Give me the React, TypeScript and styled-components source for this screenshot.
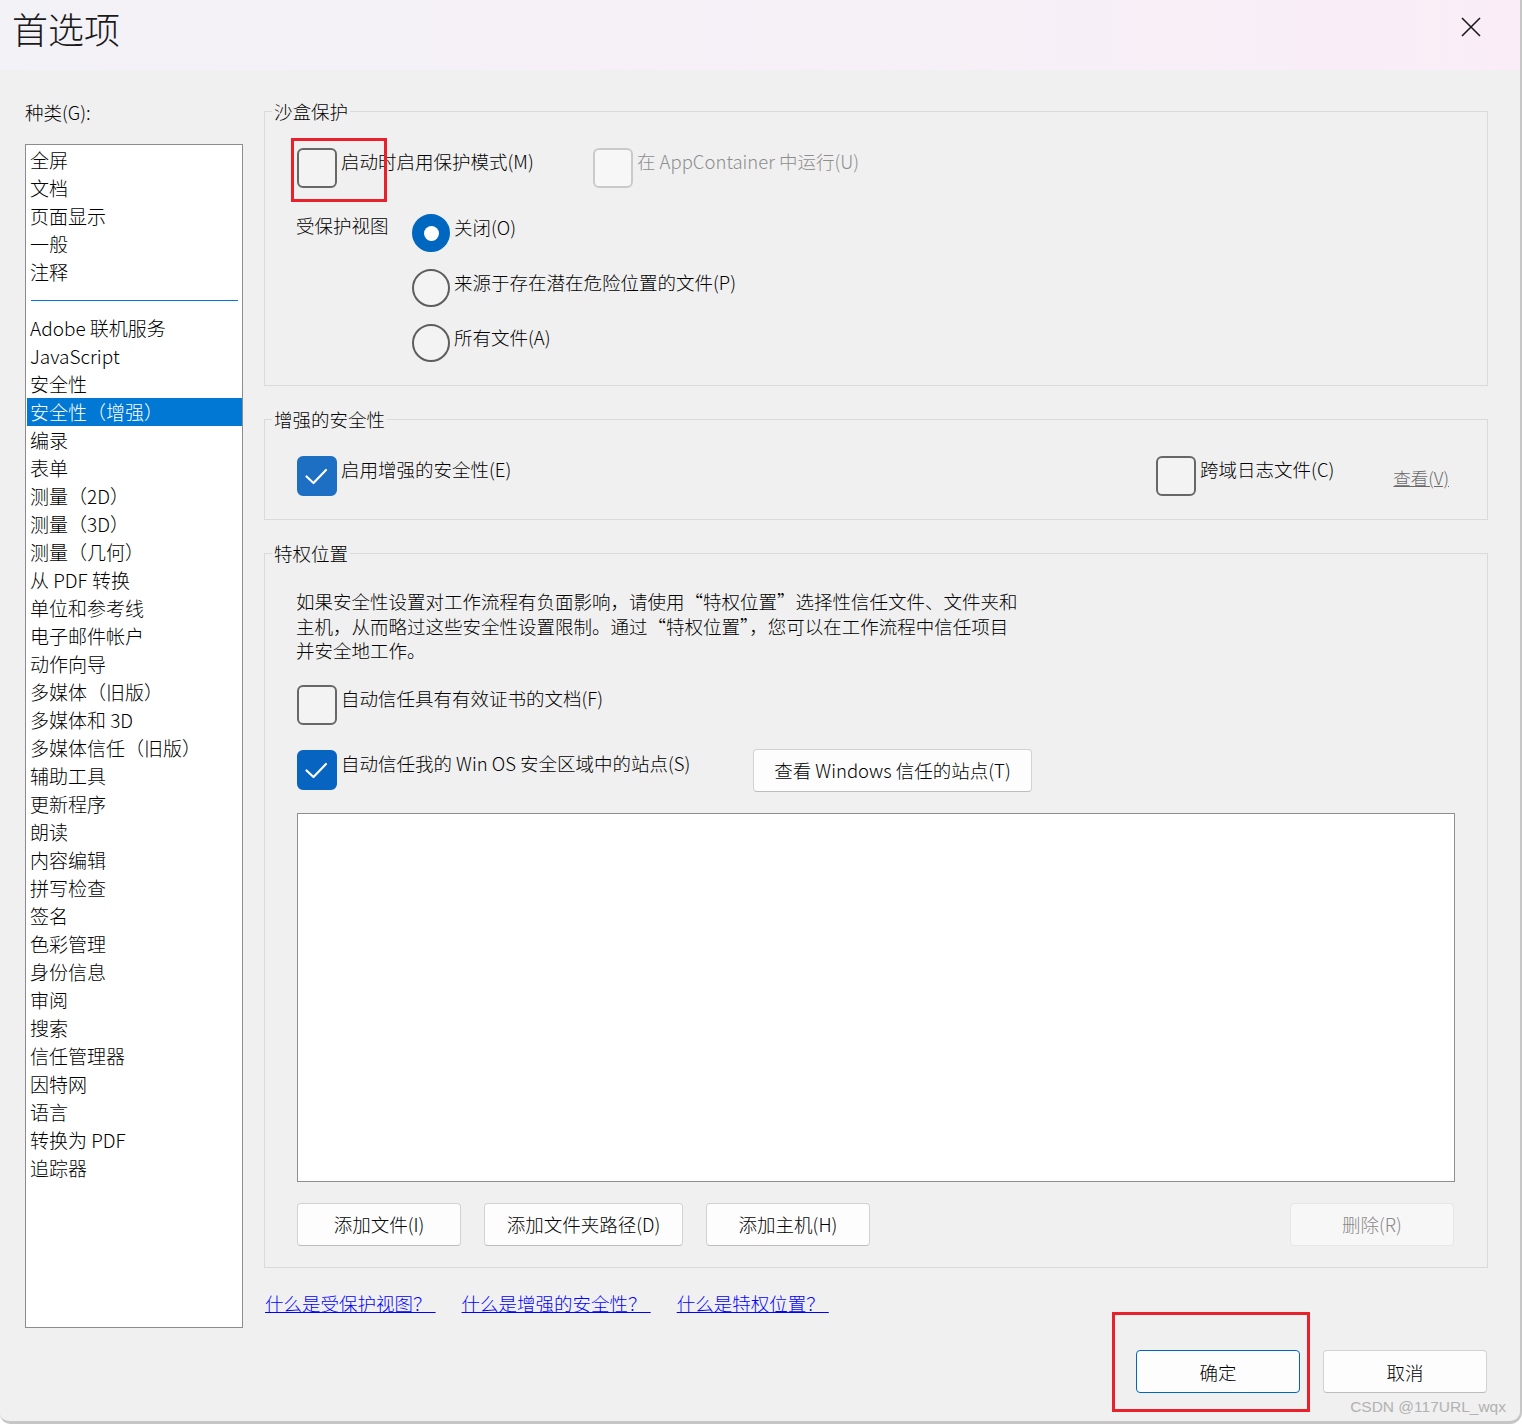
import styled, { createGlobalStyle } from "styled-components";

/* ─── Data ─── */

const topCategories = ["全屏", "文档", "页面显示", "一般", "注释"];

const categories = [
  "Adobe 联机服务",
  "JavaScript",
  "安全性",
  "安全性（增强）",
  "编录",
  "表单",
  "测量（2D）",
  "测量（3D）",
  "测量（几何）",
  "从 PDF 转换",
  "单位和参考线",
  "电子邮件帐户",
  "动作向导",
  "多媒体（旧版）",
  "多媒体和 3D",
  "多媒体信任（旧版）",
  "辅助工具",
  "更新程序",
  "朗读",
  "内容编辑",
  "拼写检查",
  "签名",
  "色彩管理",
  "身份信息",
  "审阅",
  "搜索",
  "信任管理器",
  "因特网",
  "语言",
  "转换为 PDF",
  "追踪器",
];

const SELECTED = "安全性（增强）";

/* ─── Styles ─── */

const GlobalStyle = createGlobalStyle`
  html, body {
    margin: 0;
    padding: 0;
    background: #ffffff;
  }
  body {
    font-family: "Noto Sans CJK SC", "Microsoft YaHei", "Noto Sans", sans-serif;
    font-weight: 300;
    color: #000;
  }
  * { box-sizing: border-box; }
`;

const Window = styled.div`
  position: relative;
  width: 1522px;
  height: 1424px;
  background: #f0f0f0;
  border-right: 2px solid #c6c6c6;
  border-bottom: 3px solid #c6c6c6;
  border-bottom-left-radius: 10px;
  border-bottom-right-radius: 12px;
  overflow: hidden;
`;

const TitleBar = styled.div`
  height: 70px;
  display: flex;
  justify-content: space-between;
  align-items: flex-start;
  padding: 0 39px 0 12px;
  background: linear-gradient(90deg, #f3f2f7 0%, #f6f0f7 60%, #faedf7 100%);
`;

const Title = styled.h1`
  margin: 0;
  font-size: 36px;
  font-weight: 300;
  line-height: 56px;
  color: #1a1a1a;
`;

const CloseButton = styled.button`
  margin-top: 17px;
  width: 20px;
  height: 20px;
  padding: 0;
  border: none;
  background: none;
  display: flex;
  color: #1a1a1a;
`;

const Body = styled.div`
  padding-left: 25px;
`;

const Columns = styled.div`
  display: flex;
  align-items: flex-start;
  gap: 21px;
`;

const LeftColumn = styled.div`
  width: 218px;
  display: flex;
  flex-direction: column;
`;

const CategoryLabel = styled.div`
  margin-top: 28px;
  font-size: 18.5px;
  line-height: 28px;
`;

const CategoryList = styled.div`
  margin-top: 18px;
  height: 1184px;
  background: #ffffff;
  border: 1px solid #8b8b90;
  padding: 1px 0 0 1px;
`;

const CategoryItem = styled.div<{ $selected?: boolean }>`
  height: 28px;
  line-height: 28px;
  padding-left: 3px;
  font-size: 19px;
  white-space: nowrap;
  background: ${(p) => (p.$selected ? "#0078d4" : "transparent")};
  color: ${(p) => (p.$selected ? "#ffffff" : "#000000")};
`;

const CategoryDivider = styled.div`
  height: 28px;
  display: flex;
  align-items: center;
  padding: 0 4px 0 4px;

  &::before {
    content: "";
    flex: 1;
    height: 1px;
    background: #0078d4;
  }
`;

const RightColumn = styled.div`
  width: 1224px;
  display: flex;
  flex-direction: column;
`;

const Group = styled.section<{ $mt: number; $pt: number; $pb: number }>`
  position: relative;
  margin-top: ${(p) => p.$mt}px;
  padding: ${(p) => p.$pt}px 33px ${(p) => p.$pb}px 32px;
  border: 1px solid #dadada;
`;

const GroupLegend = styled.span`
  position: absolute;
  top: -14px;
  left: 7px;
  padding: 0 2px;
  background: #f0f0f0;
  font-size: 18.5px;
  line-height: 26px;
`;

const Row = styled.div<{ $mt?: number }>`
  display: flex;
  align-items: flex-start;
  margin-top: ${(p) => p.$mt ?? 0}px;
`;

const CheckItem = styled.label<{ $width?: number; $push?: boolean }>`
  display: flex;
  align-items: flex-start;
  flex-shrink: 0;
  width: ${(p) => (p.$width ? `${p.$width}px` : "auto")};
  margin-left: ${(p) => (p.$push ? "auto" : "0")};
`;

const CheckBox = styled.span<{ $checked?: boolean; $disabled?: boolean; $tone?: string }>`
  width: 40px;
  height: 40px;
  flex-shrink: 0;
  border-radius: 6px;
  display: flex;
  align-items: center;
  justify-content: center;
  border: 2px solid
    ${(p) => (p.$checked ? p.$tone ?? "#0067c0" : p.$disabled ? "#cacaca" : "#676767")};
  background: ${(p) => (p.$checked ? p.$tone ?? "#0067c0" : p.$disabled ? "#f7f7f7" : "#f3f3f3")};
`;

const CheckLabel = styled.span<{ $disabled?: boolean }>`
  margin-left: 4px;
  font-size: 18.5px;
  line-height: 26px;
  white-space: nowrap;
  color: ${(p) => (p.$disabled ? "#8d8d8d" : "#000000")};
`;

const SideLabel = styled.span`
  width: 116px;
  flex-shrink: 0;
  margin-left: -1px;
  font-size: 18.5px;
  line-height: 22px;
`;

const RadioColumn = styled.div`
  display: flex;
  flex-direction: column;
  gap: 17px;
`;

const RadioItem = styled.label`
  display: flex;
  align-items: flex-start;
`;

const Radio = styled.span<{ $checked?: boolean }>`
  width: 38px;
  height: 38px;
  flex-shrink: 0;
  border-radius: 50%;
  display: flex;
  align-items: center;
  justify-content: center;
  border: 2px solid ${(p) => (p.$checked ? "#0067c0" : "#5e5e5e")};
  background: ${(p) => (p.$checked ? "#0067c0" : "#f3f3f3")};

  &::after {
    content: "";
    display: ${(p) => (p.$checked ? "block" : "none")};
    width: 15px;
    height: 15px;
    border-radius: 50%;
    background: #ffffff;
  }
`;

const ViewLink = styled.a`
  margin: 9px 5px 0 59px;
  font-size: 17.5px;
  line-height: 26px;
  color: #6a6a6a;
  text-decoration: underline;
  white-space: nowrap;
`;

const Paragraph = styled.p`
  margin: 0 0 0 -1px;
  font-size: 18.5px;
  line-height: 24.5px;
  white-space: nowrap;

  span {
    display: block;
  }
`;

const PushButton = styled.button<{ $width: number; $disabled?: boolean; $primary?: boolean; $push?: boolean }>`
  width: ${(p) => p.$width}px;
  height: 43px;
  flex-shrink: 0;
  margin-left: ${(p) => (p.$push ? "auto" : "0")};
  border-radius: 4px;
  font-family: inherit;
  font-weight: 300;
  font-size: 18.5px;
  padding: 0;
  background: ${(p) => (p.$disabled ? "#f7f7f7" : "#fdfdfd")};
  color: ${(p) => (p.$disabled ? "#8a8a8a" : "#000000")};
  border: 1px solid
    ${(p) => (p.$primary ? "#0067c0" : p.$disabled ? "#e6e6e6" : "#d2d2d2")};
  border-bottom-color: ${(p) => (p.$primary ? "#0067c0" : p.$disabled ? "#e6e6e6" : "#bdbdbd")};
`;

const SiteList = styled.div`
  margin-top: 21px;
  width: 1158px;
  height: 369px;
  background: #ffffff;
  border: 1px solid #8f8f8f;
`;

const ButtonRow = styled.div`
  display: flex;
  gap: 23px;
  margin-top: 21px;
  width: 1157px;
`;

const HelpLinks = styled.div`
  display: flex;
  gap: 26px;
  margin-top: 22px;
  padding-left: 1px;
`;

const HelpLink = styled.a`
  font-size: 18.5px;
  line-height: 26px;
  color: #0000ff;
  text-decoration: underline;
  white-space: pre;
`;

const Footer = styled.div`
  display: flex;
  justify-content: flex-end;
  gap: 23px;
  margin-top: 22px;
  padding-right: 33px;
`;

const Annotation = styled.div<{ $x: number; $y: number; $w: number; $h: number }>`
  position: absolute;
  left: ${(p) => p.$x}px;
  top: ${(p) => p.$y}px;
  width: ${(p) => p.$w}px;
  height: ${(p) => p.$h}px;
  border: 3px solid #e8212b;
  pointer-events: none;
`;

const Watermark = styled.div`
  position: absolute;
  right: 14px;
  bottom: 5px;
  font-family: "Liberation Sans", Arial, sans-serif;
  font-weight: 400;
  font-size: 15.5px;
  color: #b2b2b2;
`;

const EdgeMark = styled.div`
  position: absolute;
  right: -2px;
  top: 154px;
  width: 2px;
  height: 56px;
  background: #4a3fa6;
`;

/* ─── Icons ─── */

function CloseIcon() {
  return (
    <svg width="20" height="20" viewBox="0 0 20 20" fill="none" stroke="currentColor" strokeWidth="1.6">
      <path d="M1 1L19 19M19 1L1 19" />
    </svg>
  );
}

function CheckMark() {
  return (
    <svg width="40" height="40" viewBox="0 0 40 40" fill="none" stroke="#ffffff" strokeWidth="2.2" style={{ margin: -2 }}>
      <path d="M9.5 20.5L16.5 27L29 14" strokeLinecap="round" strokeLinejoin="round" />
    </svg>
  );
}

/* ─── Component ─── */

export default function App() {
  return (
    <>
      <GlobalStyle />
      <Window>
        <TitleBar>
          <Title>首选项</Title>
          <CloseButton aria-label="关闭">
            <CloseIcon />
          </CloseButton>
        </TitleBar>

        <Body>
          <Columns>
            <LeftColumn>
              <CategoryLabel>种类(G):</CategoryLabel>
              <CategoryList>
                {topCategories.map((c) => (
                  <CategoryItem key={c}>{c}</CategoryItem>
                ))}
                <CategoryDivider />
                {categories.map((c) => (
                  <CategoryItem key={c} $selected={c === SELECTED}>
                    {c}
                  </CategoryItem>
                ))}
              </CategoryList>
            </LeftColumn>

            <RightColumn>
              {/* Sandbox protection */}
              <Group $mt={41} $pt={36} $pb={23}>
                <GroupLegend>沙盒保护</GroupLegend>
                <Row>
                  <CheckItem $width={296}>
                    <CheckBox />
                    <CheckLabel>启动时启用保护模式(M)</CheckLabel>
                  </CheckItem>
                  <CheckItem>
                    <CheckBox $disabled />
                    <CheckLabel $disabled>在 AppContainer 中运行(U)</CheckLabel>
                  </CheckItem>
                </Row>
                <Row $mt={26}>
                  <SideLabel>受保护视图</SideLabel>
                  <RadioColumn>
                    <RadioItem>
                      <Radio $checked />
                      <CheckLabel>关闭(O)</CheckLabel>
                    </RadioItem>
                    <RadioItem>
                      <Radio />
                      <CheckLabel>来源于存在潜在危险位置的文件(P)</CheckLabel>
                    </RadioItem>
                    <RadioItem>
                      <Radio />
                      <CheckLabel>所有文件(A)</CheckLabel>
                    </RadioItem>
                  </RadioColumn>
                </Row>
              </Group>

              {/* Enhanced security */}
              <Group $mt={33} $pt={36} $pb={23}>
                <GroupLegend>增强的安全性</GroupLegend>
                <Row>
                  <CheckItem>
                    <CheckBox $checked $tone="#1c6fc3">
                      <CheckMark />
                    </CheckBox>
                    <CheckLabel>启用增强的安全性(E)</CheckLabel>
                  </CheckItem>
                  <CheckItem $push>
                    <CheckBox />
                    <CheckLabel>跨域日志文件(C)</CheckLabel>
                  </CheckItem>
                  <ViewLink>查看(V)</ViewLink>
                </Row>
              </Group>

              {/* Privileged locations */}
              <Group $mt={33} $pt={35} $pb={21}>
                <GroupLegend>特权位置</GroupLegend>
                <Paragraph>
                  <span>如果安全性设置对工作流程有负面影响，请使用“特权位置”选择性信任文件、文件夹和</span>
                  <span>主机，从而略过这些安全性设置限制。通过“特权位置”，您可以在工作流程中信任项目</span>
                  <span>并安全地工作。</span>
                </Paragraph>
                <Row $mt={22}>
                  <CheckItem>
                    <CheckBox />
                    <CheckLabel>自动信任具有有效证书的文档(F)</CheckLabel>
                  </CheckItem>
                </Row>
                <Row $mt={24}>
                  <CheckItem $width={456} style={{ marginTop: 1 }}>
                    <CheckBox $checked $tone="#0764c0">
                      <CheckMark />
                    </CheckBox>
                    <CheckLabel>自动信任我的 Win OS 安全区域中的站点(S)</CheckLabel>
                  </CheckItem>
                  <PushButton $width={279}>查看 Windows 信任的站点(T)</PushButton>
                </Row>
                <SiteList />
                <ButtonRow>
                  <PushButton $width={164}>添加文件(I)</PushButton>
                  <PushButton $width={199}>添加文件夹路径(D)</PushButton>
                  <PushButton $width={164}>添加主机(H)</PushButton>
                  <PushButton $width={164} $disabled $push>
                    删除(R)
                  </PushButton>
                </ButtonRow>
              </Group>

              <HelpLinks>
                <HelpLink>什么是受保护视图？ </HelpLink>
                <HelpLink>什么是增强的安全性？ </HelpLink>
                <HelpLink>什么是特权位置？ </HelpLink>
              </HelpLinks>
            </RightColumn>
          </Columns>

          <Footer>
            <PushButton $width={164} $primary>
              确定
            </PushButton>
            <PushButton $width={164}>取消</PushButton>
          </Footer>
        </Body>

        <Annotation $x={291} $y={138} $w={96} $h={64} />
        <Annotation $x={1112} $y={1312} $w={198} $h={100} />
        <Watermark>CSDN @117URL_wqx</Watermark>
        <EdgeMark />
      </Window>
    </>
  );
}
